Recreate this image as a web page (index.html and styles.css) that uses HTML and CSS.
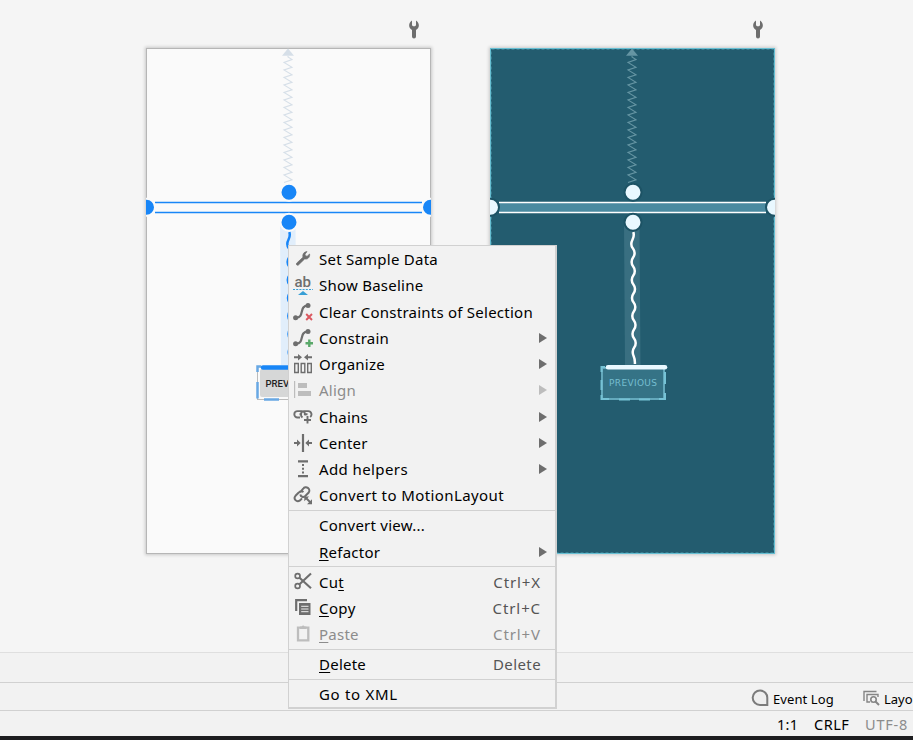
FILE: index.html
```html
<!DOCTYPE html>
<html lang="en">
<head>
<meta charset="utf-8">
<title>Layout Editor</title>
<link rel="stylesheet" href="styles.css">
</head>
<body>
<svg class="defs" width="0" height="0">
  <defs>
    <path id="zigzag" d="M142 8L142 9L146 11.6L138 14.4l8 4.9l-8 2.6l8 4.9l-8 2.6l8 4.9l-8 2.6l8 4.9l-8 2.6l8 4.9l-8 2.6l8 4.9l-8 2.6l8 4.9l-8 2.6l8 4.9l-8 2.6l8 4.9l-8 2.6l8 4.9l-8 2.6l8 4.9l-8 2.6l8 4.9l-8 2.6l8 4.9l-8 2.6l8 4.9l-8 2.6l8 4.9l-8 2.6l8 4.9l-8 2.6"/>
    <path id="arrow" d="M142 .5l6 7.2h-12z"/>
    <path id="wave" d="M143.300 184c2 6-2 7-2 12s3.300 4 3.300 9s-3 4-3 9s3.200 4 3.200 9s-3 4-3 9s3.200 4 3.200 9s-3 4-3 9s3.300 4 3.300 9s-3 4-3 9s3.200 4 3.200 9s-3 4-3 9s3.200 4 3.200 9s-3 4-3 9s2.600 4 2.200 12"/>
    <path id="band" d="M134 176h15.500l1 141h-15.500z"/>
    <path id="wrench" d="M3 .6C-.8 3-.8 8.200 3 9.900V16.500a2 2 0 0 0 4 0V9.900C10.800 8.200 10.800 3 7 .6V5.300L6 6.200H4L3 5.300z"/>
  </defs>
</svg>
<main class="canvas">
  <section class="surface">
    <svg class="wrench" width="10" height="19"><use href="#wrench"/></svg>
    <svg class="board design" width="285" height="506" viewBox="0 0 285 506">
      <rect class="edge" x=".5" y=".5" width="284" height="505"/>
      <use href="#arrow" class="anchor"/>
      <use href="#zigzag" class="spring"/>
      <use href="#band" class="band"/>
      <use href="#wave" class="wave"/>
      <path class="guide" d="M9 154.500H276M9 164.500H276"/>
      <g class="handle"><circle cx=".5" cy="159.300" r="8.500"/><circle cx="284.500" cy="159.300" r="8.500"/><circle cx="143" cy="144.200" r="8.500"/><circle cx="143" cy="174.200" r="8.500"/></g>
      <rect x="114" y="321" width="61" height="28" rx="2" fill="#d6d7d7"/>
      <rect class="frame" x="111.500" y="318.500" width="65" height="33"/>
      <path class="ticks" d="M115 318.500H111.500V324M111.500 334V350.500M118 351.500H133"/>
      <text class="label" x="119.500" y="338.500">PREV</text>
      <path class="topbar" d="M117 319.400H174"/>
    </svg>
  </section>
  <section class="surface">
    <svg class="wrench" width="10" height="19"><use href="#wrench"/></svg>
    <svg class="board blueprint" width="285" height="506" viewBox="0 0 285 506">
      <rect class="edge" x=".5" y=".5" width="284" height="505"/>
      <rect class="edge-dash" x="1.500" y="1.500" width="282" height="503"/>
      <use href="#arrow" class="anchor"/>
      <use href="#zigzag" class="spring"/>
      <use href="#band" class="band"/>
      <rect x="9" y="154" width="267" height="11" fill="#4a8aa0"/>
      <use href="#wave" class="wave"/>
      <path class="guide" d="M9 154.500H276M9 164.500H276"/>
      <g class="handle"><circle cx=".5" cy="159.300" r="8.500"/><circle cx="284.500" cy="159.300" r="8.500"/><circle cx="143" cy="144.200" r="8.500"/><circle cx="143" cy="174.200" r="8.500"/></g>
      <rect class="frame" x="112" y="320" width="62" height="31"/>
      <path class="ticks" d="M115 319H111.500V324M111.500 332V342M111.500 347V351H119M129 351.500H140M149 351.500H160M169 351H175V345M175 336V324"/>
      <text class="label" x="119" y="338" textLength="48">PREVIOUS</text>
      <path class="topbar" d="M118 319.300H175"/>
    </svg>
  </section>
</main>
<div class="panel"></div>
<div class="toolwindows">
  <span class="tool event"><svg width="18" height="18" viewBox="0 0 18 18"><path d="M16.300 16V9A7.300 7.300 0 1 0 9 16z" fill="#eee" stroke="#7b7b7b" stroke-width="2"/></svg>Event Log</span>
  <span class="tool layo"><svg width="17" height="17" viewBox="0 0 17 17" fill="none" stroke="#858585" stroke-width="1.400"><path d="M1 11V1.500H13.500M7 12H4V4.500H15V7"/><circle cx="10.500" cy="9.500" r="2.700" stroke-width="1.600"/><path d="M12.500 11.500l3.500 3.500" stroke-width="2"/></svg>Layo</span>
</div>
<footer class="status"><span class="pos">1:1</span><span class="crlf">CRLF</span><span class="enc">UTF-8</span></footer>
<div class="taskbar"></div>

<nav class="menu">
  <div class="item"><svg class="ic" viewBox="0 0 20 20"><path d="M3.600 15.200L10 9.200C9.200 6.500 10.800 3.800 14 3.600L12 6.200l.5 1.700 1.700.3L16.600 6c.5 3.500-2.100 5.700-4.900 4.900L5.400 17c-1.500.7-2.500-.8-1.800-1.800z" fill="#6e6e6e" stroke="#6e6e6e" stroke-width=".7" transform="translate(0 -1)"/></svg><span>Set Sample Data</span></div>
  <div class="item"><svg class="ic" viewBox="0 0 20 20"><text x="1.500" y="11.500" class="ab">ab</text><path d="M0 14.500H20" stroke="#389fd6" stroke-width="1.200" stroke-dasharray="2 1.200"/><path d="M10 16l5 4h-10z" fill="#389fd6"/></svg><span>Show Baseline</span></div>
  <div class="item"><svg class="ic" viewBox="0 0 20 20"><circle cx="2.600" cy="15.700" r="2.500" fill="#6e6e6e"/><circle cx="15" cy="3.500" r="2.500" fill="#6e6e6e"/><path d="M3 15.700C12 16 5.500 3.500 15 3.500" fill="none" stroke="#6e6e6e" stroke-width="2.200"/><path d="M13.200 12l5.800 6M19 12l-5.800 6" stroke="#db5860" stroke-width="1.900"/></svg><span>Clear Constraints of Selection</span></div>
  <div class="item"><svg class="ic" viewBox="0 0 20 20"><circle cx="2.600" cy="15.700" r="2.500" fill="#6e6e6e"/><circle cx="15" cy="3.500" r="2.500" fill="#6e6e6e"/><path d="M3 15.700C12 16 5.500 3.500 15 3.500" fill="none" stroke="#6e6e6e" stroke-width="2.200"/><path d="M16.300 11.500v7.500M12.500 15.300h7.500" stroke="#59a869" stroke-width="2.400"/></svg><span>Constrain</span><i class="more"></i></div>
  <div class="item"><svg class="ic" viewBox="0 0 20 20" fill="none" stroke="#6e6e6e"><path d="M1 3.300h5M19 3.300h-5" stroke-width="1.900"/><path d="M5 .1l4 3.200-4 3.200zM15 .1l-4 3.200 4 3.200z" fill="#6e6e6e" stroke="none"/><path d="M1.700 9.500h3.600v9H1.700zM8.200 9.500h3.600v9H8.200zM14.700 9.500h3.600v9h-3.600z" stroke-width="1.400"/></svg><span>Organize</span><i class="more"></i></div>
  <div class="item off"><svg class="ic" viewBox="0 0 20 20" fill="#bdbdbd"><path d="M1 1h1.200v17H1zM5 3h9v5H5zM5 11h13v5H5z"/></svg><span>Align</span><i class="more"></i></div>
  <div class="item"><svg class="ic" viewBox="0 0 20 20" fill="none" stroke="#6e6e6e" stroke-width="1.900"><path d="M7 10.500H4.500a3.200 3.200 0 0 1 0-6.400H9a3 3 0 0 1 2.600 4.300M9.500 10.500C6.800 8.500 7.800 4.100 11 4.100h4.200c3.500 0 4.200 4.200 2 5.800M6.500 7.300H9M11 7.300h3.500M14.500 9v7.500M11 13h7"/></svg><span>Chains</span><i class="more"></i></div>
  <div class="item"><svg class="ic" viewBox="0 0 20 20" fill="#6e6e6e"><path d="M8.900 1h2.200v18H8.900zM1 9h3V6.400L7.700 10 4 13.600V11H1zM19 9h-3V6.400L12.300 10l3.700 3.600V11h3z"/></svg><span>Center</span><i class="more"></i></div>
  <div class="item"><svg class="ic" viewBox="0 0 20 20" fill="#6e6e6e"><path d="M5 1.300h10v2.200H5zM5 16h10v2.200H5zM9 5h2v2H9zM9 8.700h2v2H9zM9 12.400h2v2H9z"/></svg><span class="wide">Add helpers</span><i class="more"></i></div>
  <div class="item"><svg class="ic" viewBox="0 0 20 20" fill="none" stroke="#6e6e6e" stroke-width="2"><path d="M7 7.300L10.200 3.700a3.300 3.300 0 0 1 5.500 3.800L12.300 11c-2 1.800-4.500.8-5-1.500M10.500 7c-1.800-1.200-3.800-.7-5 .8L2.500 10.800c-2.500 3 1 7 4.500 4.600l2-2"/><path d="M13 13l5 5" stroke-width="1.900"/><path d="M11.300 11.400h4.800l-4.800 4.800zM19 14.200v5h-5z" fill="#6e6e6e" stroke="none"/></svg><span class="wide">Convert to MotionLayout</span></div>
  <div class="sep"></div>
  <div class="item"><span class="noicon">Convert view...</span></div>
  <div class="item"><span class="noicon"><u>R</u>efactor</span><i class="more"></i></div>
  <div class="sep"></div>
  <div class="item"><svg class="ic" viewBox="0 0 20 20" fill="none" stroke="#6e6e6e"><circle cx="4.600" cy="4" r="2.400" stroke-width="1.700"/><circle cx="4.600" cy="14" r="2.400" stroke-width="1.700"/><path d="M6.500 5.700L18 16.300M6.500 12.300L18 1.500" stroke-width="2.100"/></svg><span>Cu<u>t</u></span><kbd>Ctrl+X</kbd></div>
  <div class="item"><svg class="ic" viewBox="0 0 20 20"><path d="M3.200 13V2.200H14" fill="none" stroke="#6e6e6e" stroke-width="2.200"/><path d="M6 5h11.500v12H6z" fill="#6e6e6e"/><path d="M8.200 8.300H15.500M8.200 11H15.500M8.200 13.700H15.500" stroke="#eee" stroke-width="1"/></svg><span class="wide"><u>C</u>opy</span><kbd>Ctrl+C</kbd></div>
  <div class="item off"><svg class="ic" viewBox="0 0 20 20"><path d="M5 3.700h10.300v12.600H5z" fill="none" stroke="#bdbdbd" stroke-width="2.300"/><path d="M7 5V2.500h1.800a1.400 1.400 0 0 1 2.700 0h1.800V5z" fill="#bdbdbd"/></svg><span><u>P</u>aste</span><kbd>Ctrl+V</kbd></div>
  <div class="sep"></div>
  <div class="item"><span class="noicon"><u>D</u>elete</span><kbd class="word">Delete</kbd></div>
  <div class="sep"></div>
  <div class="item"><span class="noicon wider">Go to XML</span></div>
</nav>
</body>
</html>
```
FILE: styles.css
```css
* { box-sizing: border-box; }
body {
  margin: 0;
  width: 913px;
  height: 740px;
  overflow: hidden;
  display: flex;
  flex-direction: column;
  background: #f2f2f2;
  color: #000;
  font: 15px/26px "Noto Sans", "Open Sans", sans-serif;
}
.defs { display: none; }
.canvas {
  height: 652px;
  flex: none;
  display: flex;
  gap: 59px;
  padding: 20px 0 0 146px;
  background: #f5f5f5;
}
.surface { width: 285px; display: flex; flex-direction: column; gap: 9px; }
.wrench { align-self: flex-end; margin-right: 12px; fill: #6e6e6e; }
.board { display: block; flex: none; margin-top: -1px; box-shadow: 0 0 3px 1px #c8c8c8; }
.surface .board { margin-top: 0; }
.design { background: #fafafa; }
.blueprint { background: #235c6f; }
.anchor { fill: #d6dfe8; }
.spring { fill: none; stroke: #d6dfe8; stroke-width: 1.100; }
.band { fill: #e1eefb; }
.wave { fill: none; stroke: #1886f7; stroke-width: 2.500; }
.guide { stroke: #1886f7; stroke-width: 1.300; }
.handle { fill: #1886f7; stroke: #fafafa; stroke-width: 2; }
.frame { fill: none; stroke: #bbb; }
.ticks { fill: none; stroke: #68a8e4; stroke-width: 2.500; }
.topbar { stroke: #1886f7; stroke-width: 4.500; stroke-linecap: round; }
.label { font: 500 9.500px Roboto, sans-serif; letter-spacing: 0; fill: #222; }
.edge { fill: none; stroke: #b6b6b6; }
.edge-dash { fill: none; stroke: #438b9e; stroke-dasharray: 3 2; stroke-width: .7; }
.blueprint .edge { stroke: #66bfd3; }
.blueprint .anchor { fill: #6595a3; }
.blueprint .spring { stroke: #6595a3; }
.blueprint .band { fill: #396f81; }
.blueprint .wave, .blueprint .guide { stroke: #fff; }
.blueprint .handle { fill: #e9f8ff; stroke: #1d5365; }
.blueprint .frame { fill: #357386; stroke: #64a9bc; stroke-width: 2; }
.blueprint .ticks { stroke: #76c3d6; stroke-width: 2; }
.blueprint .topbar { stroke: #e9f8ff; }
.blueprint .label { font: 9px "DejaVu Sans", sans-serif; fill: #75bed0; }
.panel { height: 30px; flex: none; border-top: 1px solid #dfdfdf; }
.toolwindows {
  height: 28px;
  flex: none;
  border-top: 1px solid #d1d1d1;
  display: flex;
  padding: 3px 0 0 751px;
  font-size: 13px;
  letter-spacing: .1px;
  white-space: nowrap;
}
.tool { display: flex; align-items: center; height: 26px; flex: none; }
.tool svg { flex: none; margin-top: -2px; }
.event { width: 112px; gap: 4px; }
.layo { gap: 4px; letter-spacing: 0; }
.status {
  height: 26px;
  flex: none;
  display: flex;
  border-top: 1px solid #d1d1d1;
  padding-left: 777px;
  font-size: 14.500px;
  white-space: nowrap;
}
.pos { width: 37px; letter-spacing: .3px; }
.crlf { width: 51px; letter-spacing: .5px; }
.enc { color: #8c8c8c; letter-spacing: .8px; }
.taskbar { height: 4px; flex: none; background: #1d1d20; }
.menu {
  position: absolute;
  left: 288px;
  top: 245px;
  width: 269px;
  height: 464px;
  background: #f2f2f2;
  border: 1px solid #d1d1d1;
  border-width: 1px 2px 2px 1px;
  letter-spacing: .240px;
}
.item {
  height: 26.240px;
  display: flex;
  align-items: center;
  padding: 0 14px 0 4px;
  white-space: nowrap;
}
.ic { width: 20px; height: 20px; margin-right: 6px; flex: none; }
.noicon { margin-left: 26px; }
.wide { letter-spacing: .4px; }
.wider { letter-spacing: .7px; }
.item u { text-underline-offset: 2px; text-decoration-thickness: 1px; text-decoration-skip-ink: none; }
.ab { font: 500 15px Roboto, sans-serif; letter-spacing: 0; fill: #6e6e6e; }
.off { color: #8c8c8c; }
.more {
  margin-left: auto;
  margin-right: -6px;
  border-left: 8px solid #6e6e6e;
  border-top: 5px solid transparent;
  border-bottom: 5px solid transparent;
}
.off .more { border-left-color: #bdbdbd; }
kbd { margin-left: auto; font: inherit; color: #555; letter-spacing: .900px; }
.word { letter-spacing: .4px; }
.off kbd { color: #8c8c8c; }
.sep { height: 3.900px; padding-top: 1.400px; }
.sep::before { content: ""; display: block; height: 1px; background: #d1d1d1; }
```
